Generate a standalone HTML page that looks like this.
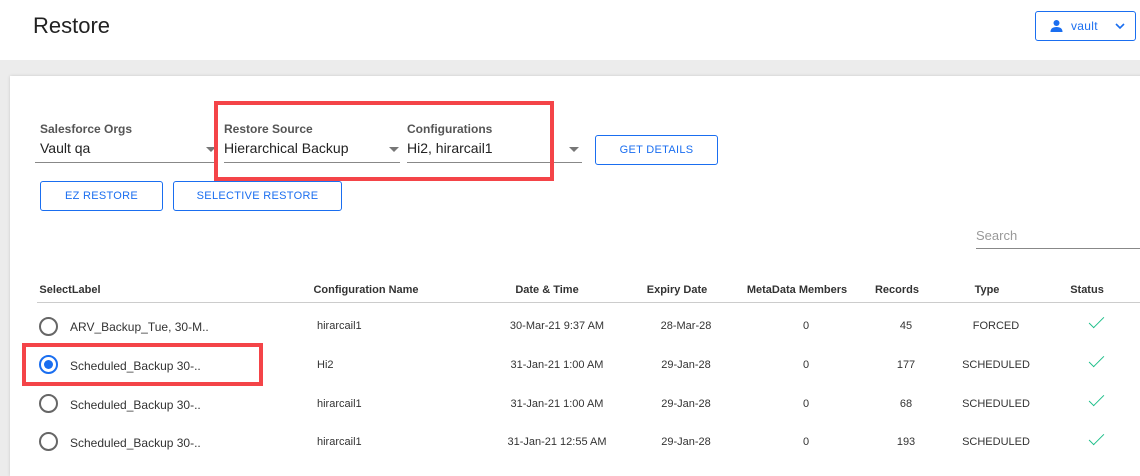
<!DOCTYPE html><html><head><style>
body{margin:0;width:1140px;height:462px;overflow:hidden;background:#ececec;font-family:"Liberation Sans",sans-serif;position:relative}
.a{position:absolute;white-space:nowrap}
.hdr{left:0;top:0;width:1140px;height:60px;background:#fff}
.card{left:10px;top:76px;width:1140px;height:400px;background:#fff;box-shadow:0 0 3px rgba(0,0,0,.15)}
.lbl{font-size:12px;font-weight:bold;color:#555;top:122px}
.val{font-size:14px;color:#222;top:140px}
.ul{height:1px;background:#888;top:162px}
.arr{width:0;height:0;border-left:5px solid transparent;border-right:5px solid transparent;border-top:5px solid #777;top:147px}
.btn{border:1px solid #1a6ef0;border-radius:3px;color:#1a6ef0;font-size:11px;display:flex;align-items:center;justify-content:center;letter-spacing:.3px}
.th{font-size:11px;font-weight:bold;color:#333;top:284px;transform:translateX(-50%)}
.td{font-size:11px;color:#333;transform:translateX(-50%)}
.rad{width:15px;height:15px;border:2px solid #666;border-radius:50%;left:39px}
.chk{width:14px;height:6px;border-left:1.5px solid #1dbf8a;border-bottom:1.5px solid #1dbf8a;transform:rotate(-45deg);left:1089px}
</style></head><body>
<div class="a hdr"></div>
<div class="a" style="left:33px;top:13px;font-size:22px;color:#222">Restore</div>
<div class="a btn" style="left:1035px;top:11px;width:99px;height:28px;font-size:12px;justify-content:flex-start">
<svg style="margin-left:14px" width="13" height="12" viewBox="0 0 13 12"><circle cx="6.5" cy="3" r="3" fill="#1a6ef0"/><path d="M0.5 12 Q0.5 7 6.5 7 Q12.5 7 12.5 12Z" fill="#1a6ef0"/></svg>
<span style="margin-left:8px">vault</span>
<svg style="margin-left:17px" width="10" height="7" viewBox="0 0 10 7"><path d="M1 1 L5 5 L9 1" stroke="#1a6ef0" stroke-width="1.6" fill="none"/></svg></div>
<div class="a card"></div>

<div class="a lbl" style="left:40px">Salesforce Orgs</div>
<div class="a val" style="left:40px">Vault qa</div>
<div class="a ul" style="left:35px;width:180px"></div>
<div class="a arr" style="left:206px"></div>

<div class="a lbl" style="left:224px">Restore Source</div>
<div class="a val" style="left:224px">Hierarchical Backup</div>
<div class="a ul" style="left:224px;width:176px"></div>
<div class="a arr" style="left:389px"></div>

<div class="a lbl" style="left:407px">Configurations</div>
<div class="a val" style="left:407px">Hi2, hirarcail1</div>
<div class="a ul" style="left:407px;width:175px"></div>
<div class="a arr" style="left:569px"></div>

<div class="a" style="left:214px;top:101px;width:332px;height:72px;border:4px solid #f44448"></div>

<div class="a btn" style="left:595px;top:135px;width:121px;height:28px">GET DETAILS</div>
<div class="a btn" style="left:40px;top:181px;width:121px;height:28px">EZ RESTORE</div>
<div class="a btn" style="left:173px;top:181px;width:167px;height:28px">SELECTIVE RESTORE</div>

<div class="a" style="left:976px;top:228px;font-size:13px;color:#999">Search</div>
<div class="a" style="left:976px;top:248px;width:164px;height:1px;background:#888"></div>

<div class="a th" style="left:70px">SelectLabel</div>
<div class="a th" style="left:366px">Configuration Name</div>
<div class="a th" style="left:547px">Date &amp; Time</div>
<div class="a th" style="left:677px">Expiry Date</div>
<div class="a th" style="left:797px">MetaData Members</div>
<div class="a th" style="left:897px">Records</div>
<div class="a th" style="left:987px">Type</div>
<div class="a th" style="left:1087px">Status</div>
<div class="a" style="left:37px;top:302px;width:1103px;height:1px;background:#ccc"></div>

<div class="a rad" style="top:317px"></div>
<div class="a rad" style="top:355px;border-color:#1a6ef0"><div class="a" style="left:3px;top:3px;width:9px;height:9px;border-radius:50%;background:#1a6ef0"></div></div>
<div class="a rad" style="top:394px"></div>
<div class="a rad" style="top:432px"></div>
<div class="a" style="left:22px;top:343px;width:233px;height:35px;border:4px solid #f44448"></div>

<div class="a" style="left:70px;top:320px;font-size:12px;color:#333">ARV_Backup_Tue, 30-M..</div>
<div class="a" style="left:70px;top:359px;font-size:12px;color:#333">Scheduled_Backup 30-..</div>
<div class="a" style="left:70px;top:398px;font-size:12px;color:#333">Scheduled_Backup 30-..</div>
<div class="a" style="left:70px;top:436px;font-size:12px;color:#333">Scheduled_Backup 30-..</div>

<div class="a" style="left:317px;top:320px;font-size:11px;color:#333">hirarcail1</div>
<div class="a" style="left:317px;top:359px;font-size:11px;color:#333">Hi2</div>
<div class="a" style="left:317px;top:398px;font-size:11px;color:#333">hirarcail1</div>
<div class="a" style="left:317px;top:436px;font-size:11px;color:#333">hirarcail1</div>

<div class="a td" style="left:557px;top:320px">30-Mar-21 9:37 AM</div>
<div class="a td" style="left:557px;top:359px">31-Jan-21 1:00 AM</div>
<div class="a td" style="left:557px;top:398px">31-Jan-21 1:00 AM</div>
<div class="a td" style="left:557px;top:436px">31-Jan-21 12:55 AM</div>

<div class="a td" style="left:686px;top:320px">28-Mar-28</div>
<div class="a td" style="left:686px;top:359px">29-Jan-28</div>
<div class="a td" style="left:686px;top:398px">29-Jan-28</div>
<div class="a td" style="left:686px;top:436px">29-Jan-28</div>

<div class="a td" style="left:806px;top:320px">0</div>
<div class="a td" style="left:806px;top:359px">0</div>
<div class="a td" style="left:806px;top:398px">0</div>
<div class="a td" style="left:806px;top:436px">0</div>

<div class="a td" style="left:906px;top:320px">45</div>
<div class="a td" style="left:906px;top:359px">177</div>
<div class="a td" style="left:906px;top:398px">68</div>
<div class="a td" style="left:906px;top:436px">193</div>

<div class="a td" style="left:996px;top:320px">FORCED</div>
<div class="a td" style="left:996px;top:359px">SCHEDULED</div>
<div class="a td" style="left:996px;top:398px">SCHEDULED</div>
<div class="a td" style="left:996px;top:436px">SCHEDULED</div>

<div class="a chk" style="top:317px"></div>
<div class="a chk" style="top:356px"></div>
<div class="a chk" style="top:395px"></div>
<div class="a chk" style="top:434px"></div>
</body></html>
